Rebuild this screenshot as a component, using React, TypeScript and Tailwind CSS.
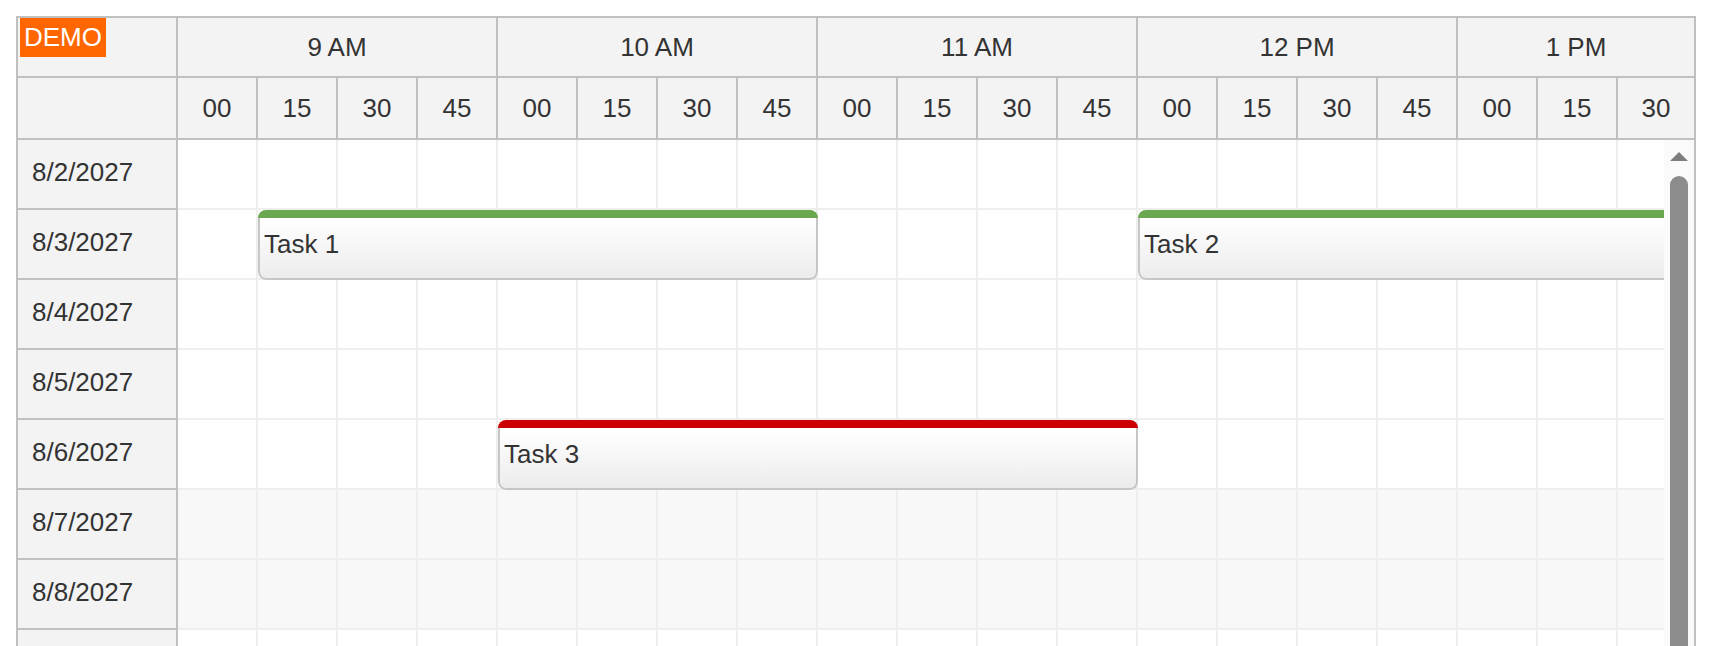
import React from "react";

const hours = ["9 AM", "10 AM", "11 AM", "12 PM"];
const minutes = [
  "00", "15", "30", "45",
  "00", "15", "30", "45",
  "00", "15", "30", "45",
  "00", "15", "30", "45",
  "00", "15",
];
const rows = [
  { label: "8/2/2027", weekend: false },
  { label: "8/3/2027", weekend: false },
  { label: "8/4/2027", weekend: false },
  { label: "8/5/2027", weekend: false },
  { label: "8/6/2027", weekend: false },
  { label: "8/7/2027", weekend: true },
  { label: "8/8/2027", weekend: true },
  { label: "", weekend: false },
];

type Ev = { text: string; row: number; start: number; span: number; color: string };
const events: Ev[] = [
  { text: "Task 1", row: 1, start: 1, span: 7, color: "#6aa84f" },
  { text: "Task 2", row: 1, start: 12, span: 10, color: "#6aa84f" },
  { text: "Task 3", row: 4, start: 4, span: 8, color: "#cc0000" },
];

function EventBox({ ev }: { ev: Ev }) {
  return (
    <div
      className="absolute flex flex-col rounded-[8px] overflow-hidden"
      style={{ left: ev.start * 80, top: ev.row * 70, width: ev.span * 80, height: 70 }}
    >
      <div className="h-[8px] shrink-0" style={{ backgroundColor: ev.color }} />
      <div className="flex-1 border-x-2 border-b-2 border-[#c6c6c6] rounded-b-[8px] bg-gradient-to-b from-[#ffffff] to-[#ececec] pt-[11px] pl-[4px] leading-[30px] text-[26px] text-[#333333]">
        {ev.text}
      </div>
    </div>
  );
}

export default function App() {
  return (
    <div
      className="h-[646px] overflow-hidden bg-white pl-4 pt-4 text-[#333333]"
      style={{ fontFamily: '"Liberation Sans", Arial, sans-serif' }}
    >
      <div className="w-[1680px] border-2 border-[#c0c0c0] text-[26px]">
        {/* Header row 1 */}
        <div className="flex h-[60px] border-b-2 border-[#c0c0c0] bg-[#f3f3f3]">
          <div className="w-[160px] shrink-0 border-r-2 border-[#c0c0c0] pl-[2px]">
            <span className="inline-block bg-[#ff6600] px-[4px] pt-[4px] pb-[5px] leading-[30px] text-white">
              DEMO
            </span>
          </div>
          {hours.map((h) => (
            <div
              key={h}
              className="w-[320px] shrink-0 border-r-2 border-[#c0c0c0] flex items-center justify-center leading-[30px]"
            >
              {h}
            </div>
          ))}
          <div className="flex-1 flex items-center justify-center leading-[30px]">1 PM</div>
        </div>
        {/* Header row 2 */}
        <div className="flex h-[62px] border-b-2 border-[#c0c0c0] bg-[#f3f3f3]">
          <div className="w-[160px] shrink-0 border-r-2 border-[#c0c0c0]" />
          {minutes.map((m, i) => (
            <div
              key={i}
              className="w-[80px] shrink-0 border-r-2 border-[#c0c0c0] flex items-center justify-center leading-[30px]"
            >
              {m}
            </div>
          ))}
          <div className="flex-1 flex items-center justify-center leading-[30px]">30</div>
        </div>
        {/* Body */}
        <div className="flex">
          <div className="w-[160px] shrink-0 border-r-2 border-[#c0c0c0] bg-[#f3f3f3]">
            {rows.map((r, i) => (
              <div
                key={i}
                className="h-[70px] border-b-2 border-[#c0c0c0] flex items-center pl-[14px] pb-[4px] leading-[30px]"
              >
                {r.label}
              </div>
            ))}
          </div>
          <div className="relative flex-1 overflow-hidden">
            {rows.map((r, i) => (
              <div
                key={i}
                className={`flex h-[70px] border-b-2 border-[#eeeeee] ${r.weekend ? "bg-[#f8f8f8]" : "bg-white"}`}
              >
                {Array.from({ length: 19 }).map((_, j) => (
                  <div key={j} className="w-[80px] shrink-0 border-r-2 border-[#eeeeee]" />
                ))}
              </div>
            ))}
            {events.map((ev) => (
              <EventBox key={ev.text} ev={ev} />
            ))}
          </div>
          <div className="w-[30px] shrink-0 bg-[#fafafa] flex flex-col items-center pt-[12px]">
            <svg width="18" height="9" viewBox="0 0 18 9">
              <polygon points="9,0 18,9 0,9" fill="#7d7d7d" />
            </svg>
            <div className="mt-[15px] w-[18px] h-[600px] rounded-t-[9px] bg-[#8c8c8c]" />
          </div>
        </div>
      </div>
    </div>
  );
}
